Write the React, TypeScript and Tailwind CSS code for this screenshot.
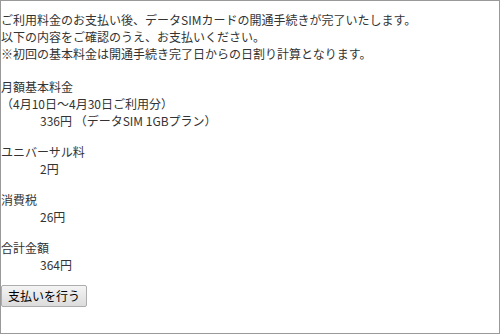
export default function App() {
  const items = [
    { label: ["月額基本料金", "（4月10日～4月30日ご利用分）"], value: "336円 （データSIM 1GBプラン）" },
    { label: ["ユニバーサル料"], value: "2円" },
    { label: ["消費税"], value: "26円" },
    { label: ["合計金額"], value: "364円" },
  ];

  return (
    <div className="w-[500px] h-[334px] border border-[#999] bg-white text-[12px] leading-[17px] text-[#333] font-['Meiryo','Noto_Sans_CJK_JP',sans-serif] overflow-hidden">
      <p className="mt-[10px]">
        ご利用料金のお支払い後、データSIMカードの開通手続きが完了いたします。
        <br />
        以下の内容をご確認のうえ、お支払いください。
        <br />
        ※初回の基本料金は開通手続き完了日からの日割り計算となります。
      </p>
      <dl className="mt-[16px] mb-[12px] flex flex-col gap-[14px]">
        {items.map((item) => (
          <div key={item.label[0]}>
            <dt>
              {item.label.map((l) => (
                <div key={l}>{l}</div>
              ))}
            </dt>
            <dd className="ml-[39px]">{item.value}</dd>
          </div>
        ))}
      </dl>
      <button
        type="button"
        className="h-[22px] px-[6px] text-[12px] leading-none text-black border border-[#adadad] rounded-[2px] bg-gradient-to-b from-[#f4f4f4] to-[#dcdcdc]"
      >
        支払いを行う
      </button>
    </div>
  );
}
